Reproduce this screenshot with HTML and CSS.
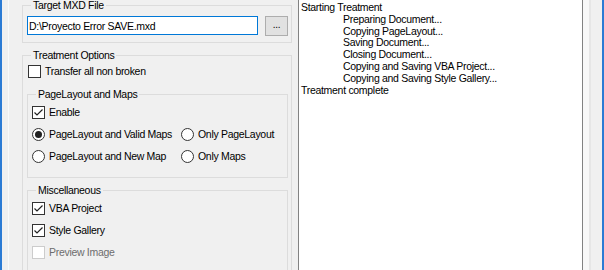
FILE: index.html
```html
<!DOCTYPE html>
<html lang="en">
<head>
  <meta charset="UTF-8" />
  <title>MXD Treatment</title>
  <link rel="stylesheet" href="styles.css">
</head>
<body>
  <div class="window">
    <div class="options-pane">
      <fieldset class="group target-group">
        <legend>Target MXD File</legend>
        <div class="file-row">
          <div class="file-input">D:\Proyecto Error SAVE.mxd</div>
          <div class="browse-btn">...</div>
        </div>
      </fieldset>

      <fieldset class="group treatment-group">
        <legend>Treatment Options</legend>
        <div class="row transfer-row"><span class="box"></span>Transfer all non broken</div>

        <fieldset class="group sub-group">
          <legend>PageLayout and Maps</legend>
          <div class="row"><span class="box checked"><svg width="11" height="11" viewBox="0 0 11 11"><path d="M1.5 5.5 L4 8 L9.5 2.5" /></svg></span>Enable</div>
          <div class="row">
            <div class="radio-col"><span class="radio on"></span>PageLayout and Valid Maps</div>
            <div><span class="radio"></span>Only PageLayout</div>
          </div>
          <div class="row">
            <div class="radio-col"><span class="radio"></span>PageLayout and New Map</div>
            <div><span class="radio"></span>Only Maps</div>
          </div>
        </fieldset>

        <fieldset class="group sub-group misc-group">
          <legend>Miscellaneous</legend>
          <div class="row"><span class="box checked"><svg width="11" height="11" viewBox="0 0 11 11"><path d="M1.5 5.5 L4 8 L9.5 2.5" /></svg></span>VBA Project</div>
          <div class="row"><span class="box checked"><svg width="11" height="11" viewBox="0 0 11 11"><path d="M1.5 5.5 L4 8 L9.5 2.5" /></svg></span>Style Gallery</div>
          <div class="row disabled"><span class="box"></span>Preview Image</div>
        </fieldset>
      </fieldset>
    </div>

    <div class="log">
      <div>Starting Treatment</div>
      <div class="step">Preparing Document...</div>
      <div class="step">Copying PageLayout...</div>
      <div class="step">Saving Document...</div>
      <div class="step">Closing Document...</div>
      <div class="step">Copying and Saving VBA Project...</div>
      <div class="step">Copying and Saving Style Gallery...</div>
      <div>Treatment complete</div>
    </div>

    <div class="side-strip"></div>
  </div>
</body>
</html>
```

FILE: styles.css
```css
html, body {
  margin: 0;
  padding: 0;
  background: #f0f0f0;
}
body {
  font-family: "Liberation Sans", Arial, sans-serif;
  font-size: 10.5px;
  letter-spacing: -0.3px;
  color: #000;
  overflow: hidden;
}
.window {
  display: flex;
  height: 270px;
  width: 604px;
  box-sizing: border-box;
  border-left: 2px solid #2b7bd4;
  border-right: 2px solid #2b7bd4;
  padding-left: 6px;
  background: #f0f0f0;
  overflow: hidden;
}
.options-pane {
  width: 290px;
  flex: none;
  box-sizing: border-box;
  border-left: 1px solid #fafafa;
  padding-left: 13px;
  padding-right: 6px;
}

/* group boxes */
.group {
  margin: 0;
  border: 1px solid #dcdcdc;
  min-width: 0;
  box-sizing: border-box;
}
.group legend {
  font-size: 10.5px;
  line-height: 10px;
  padding: 0 2px;
  margin-left: 4px;
}
.target-group {
  width: 270px;
  padding: 6px 3px 6px 4px;
}
.file-row {
  display: flex;
  gap: 7px;
}
.file-input {
  width: 231px;
  height: 19px;
  box-sizing: border-box;
  border: 1px solid #0078d7;
  background: #fff;
  padding: 2px 1px 0;
  line-height: 14px;
}
.browse-btn {
  width: 23px;
  height: 20px;
  box-sizing: border-box;
  border: 1px solid #adadad;
  background: #e1e1e1;
  text-align: center;
  line-height: 16px;
  font-size: 10px;
}
.treatment-group {
  width: 270px;
  margin-top: 7px;
  padding: 0 3px 20px 4px;
}
.sub-group {
  margin-top: 7px;
  padding: 2px 3px 10px 4px;
}
.misc-group {
  padding-bottom: 20px;
}

/* rows */
.row {
  display: flex;
  align-items: center;
  height: 22px;
}
.row > div {
  display: flex;
  align-items: center;
}
.transfer-row {
  margin-left: 1px;
}
.radio-col {
  width: 149px;
}
.box {
  width: 13px;
  height: 13px;
  box-sizing: border-box;
  border: 1px solid #333;
  background: #fff;
  margin-right: 4px;
  display: flex;
  align-items: center;
  justify-content: center;
}
.box svg path {
  fill: none;
  stroke: #222;
  stroke-width: 1.2;
}
.disabled {
  color: #6d6d6d;
}
.disabled .box {
  border-color: #cccccc;
}
.radio {
  width: 13px;
  height: 13px;
  box-sizing: border-box;
  border: 1px solid #333;
  border-radius: 50%;
  background: #fff;
  margin-right: 4px;
  display: flex;
  align-items: center;
  justify-content: center;
}
.radio.on::after {
  content: "";
  width: 7px;
  height: 7px;
  border-radius: 50%;
  background: #222;
}

/* output log */
.log {
  width: 285px;
  flex: none;
  box-sizing: border-box;
  border-left: 1px solid #828282;
  border-right: 1px solid #828282;
  background: #fff;
  padding: 2px 2px;
  font-size: 10.5px;
  line-height: 11.8px;
}
.log .step {
  padding-left: 42px;
}
.side-strip {
  flex: 1;
  background: linear-gradient(to right, #f8f8f8 0 6px, #e6e6e6 6px 8px, #f0f0f0 8px);
}
```
